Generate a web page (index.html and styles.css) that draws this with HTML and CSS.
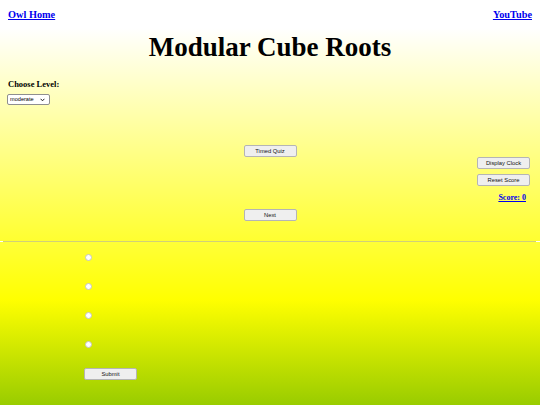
FILE: index.html
```html
<!DOCTYPE html>
<html lang="en">
<head>
<meta charset="utf-8">
<title>Modular Cube Roots</title>
<link rel="stylesheet" href="styles.css">
</head>
<body>
<div class="top">
  <div class="links">
    <a href="#">Owl Home</a>
    <a href="#">YouTube</a>
  </div>
  <h1 class="title">Modular Cube Roots</h1>
  <div class="level">
    <div class="level-label">Choose Level:</div>
    <div class="select-wrap">
      <select class="level-select">
        <option>moderate</option>
      </select>
      <svg class="chev" width="5" height="4" viewBox="0 0 5 4"><path d="M0.6 0.8 L2.5 2.8 L4.4 0.8" fill="none" stroke="#222" stroke-width="1"/></svg>
    </div>
  </div>
  <div class="controls">
    <div class="spacer"></div>
    <div class="center-col">
      <button class="btn">Timed Quiz</button>
      <button class="btn">Next</button>
    </div>
    <div class="right-col">
      <button class="btn">Display Clock</button>
      <button class="btn">Reset Score</button>
      <a class="score" href="#">Score: 0</a>
    </div>
  </div>
</div>
<div class="rule"></div>
<div class="bottom">
  <div class="choices">
    <label class="choice"><input class="radio" type="radio" name="ans"></label>
    <label class="choice"><input class="radio" type="radio" name="ans"></label>
    <label class="choice"><input class="radio" type="radio" name="ans"></label>
    <label class="choice"><input class="radio" type="radio" name="ans"></label>
  </div>
  <button class="btn submit">Submit</button>
</div>
</body>
</html>
```
FILE: styles.css
```css
html, body {
  margin: 0;
  padding: 0;
}
body {
  width: 540px;
  height: 405px;
  overflow: hidden;
  font-family: "Liberation Serif", "Times New Roman", serif;
  background: #fff;
}
.top {
  height: 241px;
  background: linear-gradient(to bottom, #ffffff 0px, #ffffff 28px, #ffff30 241px);
  box-sizing: border-box;
  padding-top: 9px;
}
.links {
  display: flex;
  justify-content: space-between;
  padding: 0 8px 0 8px;
  height: 12px;
}
.links a {
  color: #0000ee;
  font-weight: bold;
  font-size: 10.3px;
  line-height: 12px;
  text-decoration: underline;
}
.title {
  margin: 11px 0 0 0;
  text-align: center;
  font-size: 27px;
  line-height: 30px;
  font-weight: bold;
  color: #000;
}
.level {
  padding: 0 8px;
  margin-top: 17px;
}
.level-label {
  font-weight: bold;
  font-size: 8.5px;
  line-height: 10px;
  color: #000;
}
.select-wrap {
  position: relative;
  margin-top: 5px;
  margin-left: -1px;
  width: 43px;
  height: 11px;
}
.level-select {
  appearance: none;
  -webkit-appearance: none;
  display: block;
  width: 43px;
  height: 11px;
  box-sizing: border-box;
  font-family: "Liberation Sans", Arial, sans-serif;
  font-size: 5.6px;
  line-height: 9px;
  padding: 0 0 0 2px;
  border: 1px solid #8f8f8f;
  border-radius: 2px;
  background: #fff;
  color: #000;
}
.chev {
  position: absolute;
  right: 5px;
  top: 4px;
  pointer-events: none;
}
.controls {
  display: grid;
  grid-template-columns: 1fr auto 1fr;
  margin-top: 40px;
}
.center-col {
  display: flex;
  flex-direction: column;
  gap: 52px;
}
.right-col {
  display: flex;
  flex-direction: column;
  align-items: flex-end;
  gap: 5px;
  padding-top: 12px;
  padding-right: 10px;
}
.score {
  color: #0000ee;
  font-weight: bold;
  font-size: 8px;
  line-height: 10px;
  text-decoration: underline;
  margin-top: 2px;
  margin-right: 4px;
}
.btn {
  display: block;
  width: 53px;
  height: 12px;
  padding: 0;
  font-family: "Liberation Sans", Arial, sans-serif;
  font-size: 5.8px;
  line-height: 10px;
  color: #111;
  background: #efefef;
  border: 1px solid #b5b5b5;
  border-radius: 2px;
}
.rule {
  height: 1px;
  background: #d0d07a;
  margin: 0 4px 0 3px;
}
.bottom {
  height: 163px;
  background: linear-gradient(to bottom, #ffff38 0px, #ffff00 58px, #99cc00 163px);
  box-sizing: border-box;
  padding-left: 84px;
  padding-top: 12px;
}
.choices {
  display: flex;
  flex-direction: column;
  gap: 22px;
}
.choice {
  display: block;
  height: 7px;
}
.radio {
  appearance: none;
  -webkit-appearance: none;
  margin: 0 0 0 1px;
  display: block;
  width: 7px;
  height: 7px;
  border-radius: 50%;
  border: 1px solid #c4c4c4;
  background: #fff;
  box-sizing: border-box;
}
.submit {
  margin-top: 20px;
}
```
